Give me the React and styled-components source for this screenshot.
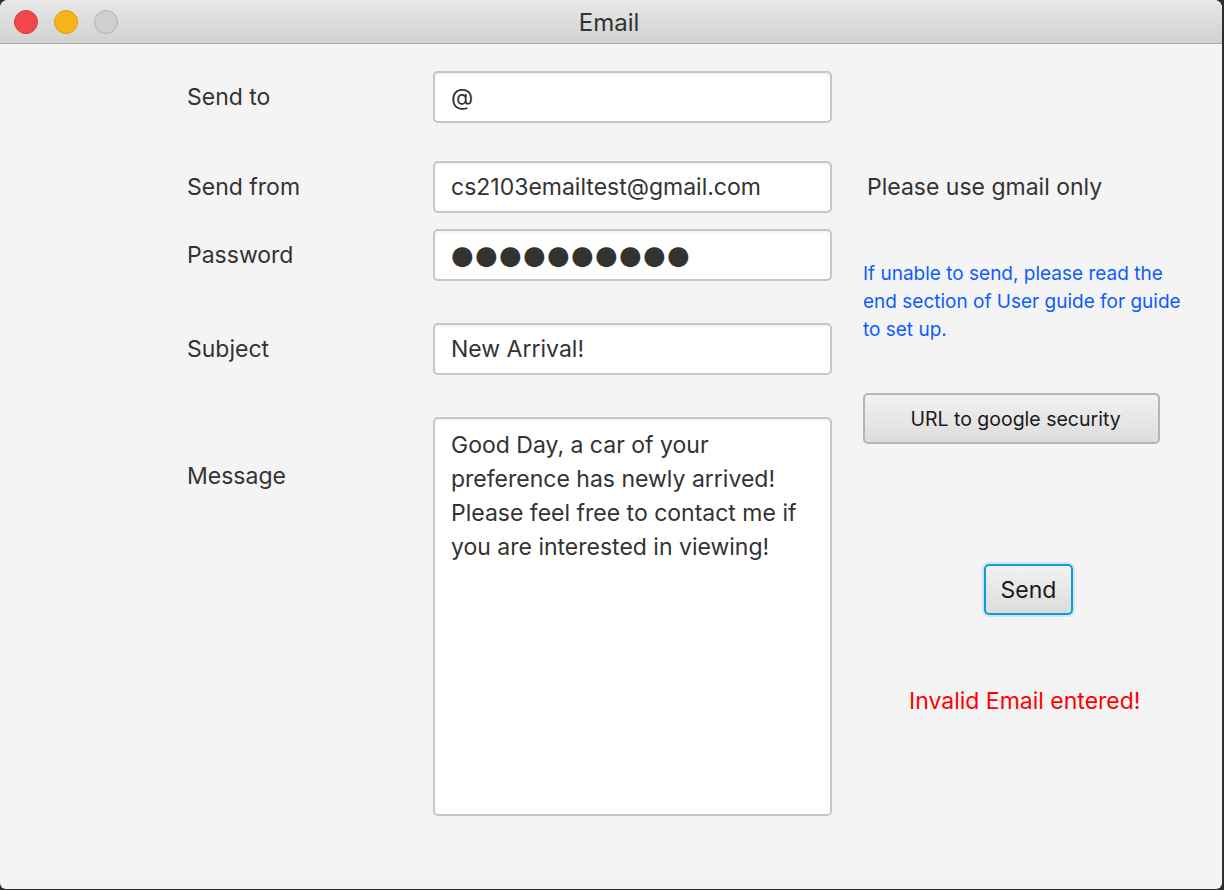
import React from "react";
import styled, { createGlobalStyle } from "styled-components";

const Global = createGlobalStyle`
  html, body { margin: 0; padding: 0; background: #2e2e2e; }
  body { font-family: Inter, "Liberation Sans", sans-serif; }
`;

const Window = styled.div`
  width: 1222px;
  height: 889px;
  background: #f4f4f4;
  border-radius: 8px 8px 6px 6px;
  overflow: hidden;
  display: flex;
  flex-direction: column;
`;

const TitleBar = styled.div`
  height: 43px;
  flex: none;
  background: linear-gradient(#e8e8e8, #d1d1d1);
  border-bottom: 1px solid #a8a8a8;
  display: grid;
  grid-template-columns: 1fr auto 1fr;
  align-items: center;
`;

const Lights = styled.div`
  display: flex;
  gap: 16px;
  padding-left: 14px;
`;

const Light = styled.span`
  width: 24px;
  height: 24px;
  border-radius: 50%;
  box-sizing: border-box;
  background: ${(p) => p.$bg};
  border: 1px solid ${(p) => p.$bd};
`;

const Title = styled.div`
  font-size: 24px;
  color: #333;
  padding: 1px 4px 0 0;
`;

const Body = styled.div`
  display: flex;
  padding: 27px 0 0 187px;
`;

const Form = styled.div`
  display: flex;
  flex-direction: column;
`;

const Row = styled.div`
  display: grid;
  grid-template-columns: 246px 399px;
  height: ${(p) => p.$h || 52}px;
  margin-top: ${(p) => p.$mt || 0}px;
`;

const Label = styled.div`
  font-size: 23px;
  color: #333;
  display: flex;
  align-items: ${(p) => (p.$top ? "flex-start" : "center")};
  padding-top: ${(p) => p.$pt || 0}px;
`;

const Field = styled.div`
  box-sizing: border-box;
  height: 100%;
  background: #fff;
  border: 2px solid #c6c6c6;
  border-radius: 5px;
  box-shadow: inset 0 3px 3px -2px rgba(0, 0, 0, 0.08);
  padding: 0 16px;
  display: flex;
  align-items: center;
  font-size: 23px;
  color: #333;
`;

const Dots = styled.span`
  font-family: "DejaVu Sans", sans-serif;
  font-size: 26px;
  letter-spacing: 1.3px;
  color: #333;
`;

const Area = styled(Field)`
  align-items: flex-start;
  padding: 9px 16px;
  line-height: 34px;
`;

const Side = styled.div`
  display: flex;
  flex-direction: column;
  align-items: flex-start;
  margin-left: 31px;
  width: 300px;
`;

const Note = styled.div`
  font-size: 23px;
  color: #333;
  margin: 102px 0 0 4px;
  line-height: 28px;
`;

const Info = styled.div`
  font-size: 19px;
  color: #0d5cff;
  line-height: 28px;
  margin-top: 59px;
  width: 330px;
`;

const Button = styled.button`
  font-family: Inter, "Liberation Sans", sans-serif;
  box-sizing: border-box;
  background: linear-gradient(#f2f2f2, #dcdcdc);
  border: 2px solid #b5b5b5;
  border-radius: 5px;
  color: #1a1a1a;
  padding: 0;
  white-space: nowrap;
  overflow: hidden;
`;

const UrlButton = styled(Button)`
  width: 297px;
  height: 51px;
  margin-top: 49px;
  font-size: 19.5px;
  text-indent: 8px;
`;

const SendButton = styled(Button)`
  width: 89px;
  height: 51px;
  margin: 120px 0 0 121px;
  font-size: 23px;
  border: 2px solid #0aa0d6;
  box-shadow: 0 0 0 2px #cfe6ef;
`;

const Error = styled.div`
  font-size: 23px;
  color: #ff0000;
  margin: 72px 0 0 46px;
`;

export default function App() {
  return (
    <>
      <Global />
      <Window>
        <TitleBar>
          <Lights>
            <Light $bg="#f2474a" $bd="#d93a3d" />
            <Light $bg="#f6b418" $bd="#dd9e12" />
            <Light $bg="#cfcfcf" $bd="#b4b4b4" />
          </Lights>
          <Title>Email</Title>
          <span />
        </TitleBar>
        <Body>
          <Form>
            <Row>
              <Label>Send to</Label>
              <Field>@</Field>
            </Row>
            <Row $mt={38}>
              <Label>Send from</Label>
              <Field>cs2103emailtest@gmail.com</Field>
            </Row>
            <Row $mt={16}>
              <Label>Password</Label>
              <Field>
                <Dots>●●●●●●●●●●</Dots>
              </Field>
            </Row>
            <Row $mt={42}>
              <Label>Subject</Label>
              <Field>New Arrival!</Field>
            </Row>
            <Row $mt={42} $h={399}>
              <Label $top $pt={45}>
                Message
              </Label>
              <Area>
                Good Day, a car of your
                <br />
                preference has newly arrived!
                <br />
                Please feel free to contact me if
                <br />
                you are interested in viewing!
              </Area>
            </Row>
          </Form>
          <Side>
            <Note>Please use gmail only</Note>
            <Info>
              If unable to send, please read the end section of User guide for
              guide to set up.
            </Info>
            <UrlButton>URL to google security</UrlButton>
            <SendButton>Send</SendButton>
            <Error>Invalid Email entered!</Error>
          </Side>
        </Body>
      </Window>
    </>
  );
}
